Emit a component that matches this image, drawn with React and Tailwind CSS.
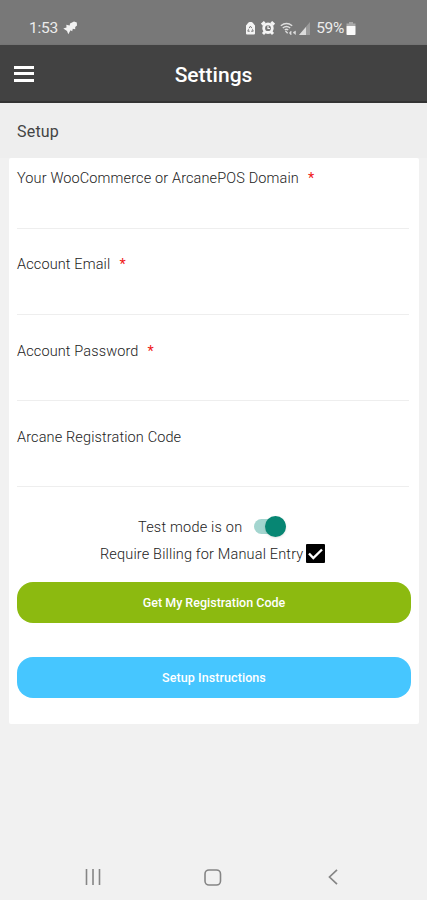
import React, { useState } from "react";

const fields = [
  { name: "domain", label: "Your WooCommerce or ArcanePOS Domain", type: "text", required: true },
  { name: "email", label: "Account Email", type: "email", required: true },
  { name: "password", label: "Account Password", type: "password", required: true },
  { name: "code", label: "Arcane Registration Code", type: "text", required: false },
];

function StatusBar() {
  return (
    <div className="h-[45px] shrink-0 bg-[#787878] flex items-center pt-[11px] pl-[29px] pr-[71px] text-[15.500px] text-[#ececec]">
      <span className="pt-[2px] tracking-[-0.2px]">1:53</span>
      <svg className="ml-[5px] w-[15px] h-[14px] -mt-[1px]" viewBox="0 0 15 14" fill="#f2f2f2">
        <path d="M7 2.500 9.500 1.200 11 .5 13.800 1.500 14 4.500 12.200 6 12.200 8.300 9.800 7.700 9.200 10.300 7.500 9.300 5.300 13.200 4 10 .3 7.500 3.500 6.500 3.300 3.700 6.700 4.500z" />
      </svg>

      <div className="ml-auto flex items-center">
        {/* saver */}
        <svg className="w-[11px] h-[14px]" viewBox="0 0 10 14">
          <path d="M2 2.800C2.500.300 7.500.300 8 2.800L9.500 4.500v8q0 1-1 1h-7q-1 0-1-1v-8z" fill="#f4f4f4" />
          <path d="m3.600 7.200 1.300-2 1.500 2M3 8.300l-.7 1.900h1.900M7 8.300l.7 1.900H5.600" fill="none" stroke="#777" strokeWidth="1" />
        </svg>
        {/* alarm */}
        <svg className="ml-[5px] w-[14px] h-[14px]" viewBox="0 0 14 14">
          <path d="M.8 3.600 3.800 1M13.200 3.600 10.200 1M2 13l1.800-2M12 13l-1.800-2" stroke="#f4f4f4" strokeWidth="2.800" />
          <circle cx="7" cy="7.200" r="4.300" fill="#777" stroke="#f4f4f4" strokeWidth="2.800" />
          <path d="M7 4.800v2.700h2" fill="none" stroke="#f4f4f4" strokeWidth="1.200" />
        </svg>
        {/* wifi */}
        <svg className="ml-[5px] w-[16px] h-[13px]" viewBox="0 0 16 13" fill="none" stroke="#dedede" strokeWidth="1.400">
          <path d="M.8 3.800Q6.500 -.8 12.200 3.800M2.800 6Q6.500 2.800 10.200 6M4.800 8Q6.500 6.600 8.200 8" />
          <path d="m5.500 9 2.200 2.200" />
          <path d="m9.300 11 1.800-2v4zM15.500 9l-2.500 1.500 2.500 2z" fill="#dedede" strokeWidth=".5" />
        </svg>
        {/* signal */}
        <svg className="ml-[3px] w-[11px] h-[13px]" viewBox="0 0 11 13">
          <path d="M11 0v13H0z" fill="#9b9b9b" />
          <path d="M7 5v8H0z" fill="#dcdcdc" />
        </svg>
        <span className="ml-[6px] pt-[2px] tracking-[-0.300px]">59%</span>
        <svg className="ml-[2px] w-[10px] h-[13px]" viewBox="0 0 10 13">
          <path d="M3 0h4v1.500h2.500V5h-9V1.500H3z" fill="#a8a8a8" />
          <rect x=".5" y="4" width="9" height="9" rx=".8" fill="#fafafa" />
        </svg>
      </div>
    </div>
  );
}

function Header() {
  return (
    <header className="h-[58px] shrink-0 bg-[#424242] border-b-2 border-[#333] shadow-[0_1px_3px_rgba(0,0,0,0.2)] grid grid-cols-[1fr_auto_1fr] items-center px-[14px]">
      <button type="button" aria-label="Menu" className="w-5 pt-[1px] flex flex-col gap-[3.500px]">
        <span className="h-[3px] w-full bg-white"></span>
        <span className="h-[3px] w-full bg-white"></span>
        <span className="h-[3px] w-full bg-white"></span>
      </button>
      <h1 className="text-[21px] font-medium text-white pt-[5px]">Settings</h1>
      <span></span>
    </header>
  );
}

function Field({ field, value, onChange }) {
  return (
    <div className="h-[86.300px] pt-[12px]">
      <div className="h-[58.500px] border-b border-[#eeeeee] mr-[2px]">
        <label htmlFor={field.name} className="block text-[14.500px] leading-[18px] font-light text-[#222] tracking-[0.130px]">
          {field.label}
          {field.required && <span className="ml-[9px] font-normal text-[#f01818]">*</span>}
        </label>
        <input
          id={field.name}
          type={field.type}
          value={value}
          onChange={onChange}
          className="block w-full h-[38px] outline-none text-[15px]"
        />
      </div>
    </div>
  );
}

function NavBar() {
  return (
    <nav className="mt-auto h-[46px] shrink-0 flex items-center justify-between pl-[85px] pr-[89px] text-[#858585]">
      <svg className="w-4 h-4" viewBox="0 0 16 16" stroke="currentColor" strokeWidth="1.600">
        <path d="M1.500 0v16M8 0v16M14.500 0v16" />
      </svg>
      <svg className="w-[18px] h-[17px] -ml-[4px]" viewBox="0 0 18 17" fill="none" stroke="currentColor" strokeWidth="1.600">
        <rect x="1" y="1" width="15.500" height="15" rx="4" />
      </svg>
      <svg className="w-[10px] h-4" viewBox="0 0 10 16" fill="none" stroke="currentColor" strokeWidth="1.700">
        <path d="M9 .8 1.500 8 9 15.200" />
      </svg>
    </nav>
  );
}

export default function App() {
  const [values, setValues] = useState({ domain: "", email: "", password: "", code: "" });
  const [testMode, setTestMode] = useState(true);
  const [requireBilling, setRequireBilling] = useState(true);

  const handleChange = (e) => {
    setValues({ ...values, [e.target.id]: e.target.value });
  };

  return (
    <div className="h-screen flex flex-col overflow-hidden bg-[#f1f1f1] font-['Roboto',sans-serif]">
      <StatusBar />
      <Header />

      <h2 className="h-[55px] shrink-0 bg-[#eeeeee] pl-[17px] pt-[3px] flex items-center text-[16px] text-[#444] tracking-[0.200px]">
        Setup
      </h2>

      <form
        onSubmit={(e) => e.preventDefault()}
        className="mx-[9px] mr-[8px] h-[566px] shrink-0 rounded-[2px] bg-white px-[8px]"
      >
        {fields.map((field) => (
          <Field key={field.name} field={field} value={values[field.name]} onChange={handleChange} />
        ))}

        <div className="h-[27px] mt-[10px] pl-[121px] flex items-center text-[14.500px] font-light text-[#222] tracking-[0.200px]">
          <span className="pt-[2px]">Test mode is on</span>
          <button
            type="button"
            role="switch"
            aria-checked={testMode}
            onClick={() => setTestMode(!testMode)}
            className={`ml-[12px] w-[32px] h-[15px] rounded-full flex items-center ${testMode ? "bg-[#a3d5cf] justify-end" : "bg-gray-300"}`}
          >
            <span className={`size-[21px] shrink-0 rounded-full shadow-sm ${testMode ? "bg-[#078673]" : "bg-gray-50"}`}></span>
          </button>
        </div>

        <div className="h-[27px] pl-[83px] flex items-center text-[14.500px] font-light text-[#222] tracking-[0.160px]">
          <span className="pt-[2px]">Require Billing for Manual Entry</span>
          <button
            type="button"
            role="checkbox"
            aria-checked={requireBilling}
            onClick={() => setRequireBilling(!requireBilling)}
            className="ml-[3px] size-[19px] rounded-[1px] bg-black flex items-center justify-center"
          >
            {requireBilling && (
              <svg className="w-[15px] h-[12px]" viewBox="0 0 15 12" fill="none" stroke="#fff" strokeWidth="2.400">
                <path d="m1 5.500 4.300 4.500L14 1.500" />
              </svg>
            )}
          </button>
        </div>

        <button type="submit" className="mt-[15px] w-full h-[41px] pt-[2px] rounded-[16px] bg-[#8cba10] text-white text-[12.500px] font-medium">
          Get My Registration Code
        </button>
        <button type="button" className="mt-[34px] w-full h-[41px] pt-[2px] rounded-[16px] bg-[#46c6ff] text-white text-[12.500px] tracking-[0.080px] font-medium">
          Setup Instructions
        </button>
      </form>

      <NavBar />
    </div>
  );
}
